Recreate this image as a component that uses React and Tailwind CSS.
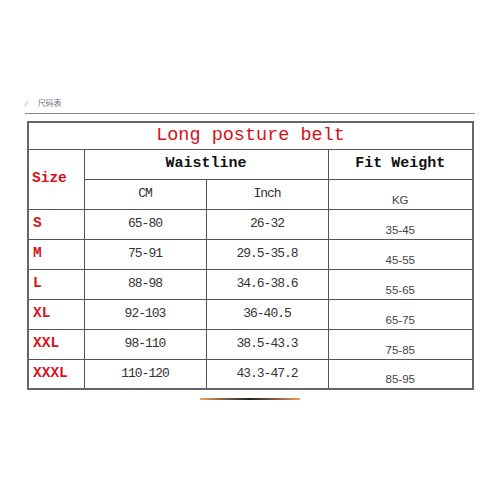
const rows = [
  ['S', '65-80', '26-32', '35-45'],
  ['M', '75-91', '29.5-35.8', '45-55'],
  ['L', '88-98', '34.6-38.6', '55-65'],
  ['XL', '92-103', '36-40.5', '65-75'],
  ['XXL', '98-110', '38.5-43.3', '75-85'],
  ['XXXL', '110-120', '43.3-47.2', '85-95'],
];

const mono = { fontFamily: '"Liberation Mono", "Noto Sans CJK SC", monospace' };

export default function App() {
  return (
    <div className="h-[500px] w-[500px] bg-white pt-[99px]">
      <div className="flex items-center gap-[9px] pl-[24px] text-[8px] leading-[10px] text-gray-400" style={mono}>
        <span>/</span>
        <span className="tracking-tight text-gray-500">尺码表</span>
      </div>
      <div className="ml-[25px] mt-[4px] h-px w-[450px] bg-[#8a8a8a]" />
      <table className="ml-[27px] mt-[7px] w-[445px] table-fixed border-collapse border-2 border-[#666]">
        <colgroup>
          <col className="w-[56px]" />
          <col className="w-[122px]" />
          <col className="w-[122px]" />
          <col className="w-[145px]" />
        </colgroup>
        <tbody>
          <tr className="h-[27px]">
            <td colSpan={4} className="border border-[#555] pt-[1px] text-center text-[18.5px] leading-[24px] text-[#d5121c]" style={mono}>
              Long posture belt
            </td>
          </tr>
          <tr className="h-[30px]">
            <td rowSpan={2} className="border border-[#555] pl-[3px] text-[14.5px] font-bold text-[#d5121c]" style={mono}>
              Size
            </td>
            <td colSpan={2} className="border border-[#555] text-center text-[15px] font-bold text-[#111]" style={mono}>
              Waistline
            </td>
            <td className="border border-[#555] text-center text-[15px] font-bold text-[#111]" style={mono}>
              Fit Weight
            </td>
          </tr>
          <tr className="h-[30px]">
            <td className="border border-[#555] text-center text-[13px] tracking-[-1px] text-[#333]" style={mono}>CM</td>
            <td className="border border-[#555] text-center text-[13px] tracking-[-1px] text-[#333]" style={mono}>Inch</td>
            <td className="border border-[#555] p-0 align-bottom">
              <div className="pb-[1px] text-center font-['Liberation_Sans',sans-serif] text-[11.5px] leading-[16px] text-[#444]">KG</div>
            </td>
          </tr>
          {rows.map(([size, cm, inch, kg]) => (
            <tr key={size} className="h-[30px]">
              <td className="border border-[#555] pl-[4px] text-[14.5px] font-bold text-[#d5121c]" style={mono}>{size}</td>
              <td className="border border-[#555] text-center text-[13px] tracking-[-1px] text-[#333]" style={mono}>{cm}</td>
              <td className="border border-[#555] text-center text-[13px] tracking-[-1px] text-[#333]" style={mono}>{inch}</td>
              <td className="border border-[#555] p-0 align-bottom">
                <div className="pb-[1px] text-center font-['Liberation_Sans',sans-serif] text-[11.5px] leading-[16px] text-[#444]">{kg}</div>
              </td>
            </tr>
          ))}
        </tbody>
      </table>
      <div className="ml-[200px] mt-[8px] h-[2px] w-[100px] bg-gradient-to-r from-[#f0a060] via-[#222] to-[#f0a060]" />
    </div>
  );
}
